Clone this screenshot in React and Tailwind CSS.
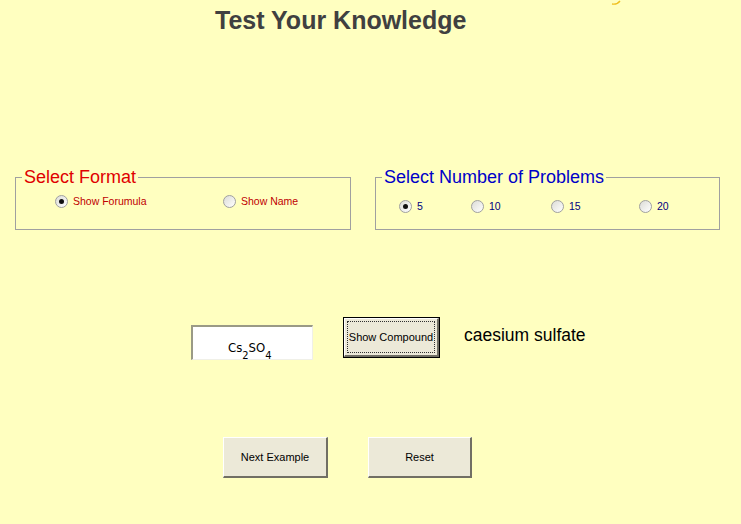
import React from "react";

function Radio({ checked, label, color, width }) {
  return (
    <div className="flex items-center shrink-0" style={{ width }}>
      <span className="relative w-[13px] h-[13px] rounded-full border border-[#a0a0a0] bg-gradient-to-br from-[#dcdcd6] to-white flex items-center justify-center">
        {checked && <span className="w-[5px] h-[5px] rounded-full bg-[#101010]" />}
      </span>
      <span className={`ml-[5px] text-[10.5px] leading-[14px] ${color}`}>{label}</span>
    </div>
  );
}

export default function App() {
  return (
    <div
      className="w-[741px] h-[524px] bg-[#ffffc0] overflow-hidden flex flex-col"
      style={{ fontFamily: '"Liberation Sans", Arial, sans-serif' }}
    >
      {/* title row */}
      <div className="flex items-start h-[40px]">
        <div className="ml-[215px] mt-[5px] text-[25px] leading-[30px] font-bold text-[#404040]">
          Test Your Knowledge
        </div>
        <svg className="ml-[145px]" width="14" height="5" viewBox="0 0 14 5">
          <path d="M1 4 Q6 5 9 1" stroke="#f0c020" strokeWidth="1.3" fill="none" />
        </svg>
      </div>

      {/* groups row */}
      <div className="flex mt-[127px] ml-[15px]">
        <fieldset className="w-[336px] h-[63px] border border-[#a0a0a0]">
          <legend className="ml-[6px] px-[2px] text-[18px] leading-[20px] text-[#e00000]">
            Select Format
          </legend>
          <div className="flex pl-[39px] pt-[7px]">
            <Radio checked label="Show Forumula" color="text-[#c00000]" width={168} />
            <Radio label="Show Name" color="text-[#c00000]" width={120} />
          </div>
        </fieldset>
        <fieldset className="ml-[24px] w-[345px] h-[63px] border border-[#a0a0a0]">
          <legend className="ml-[6px] px-[2px] text-[18px] leading-[20px] text-[#0000c8]">
            Select Number of Problems
          </legend>
          <div className="flex pl-[23px] pt-[12px]">
            <Radio checked label="5" color="text-[#000080]" width={72} />
            <Radio label="10" color="text-[#000080]" width={80} />
            <Radio label="15" color="text-[#000080]" width={88} />
            <Radio label="20" color="text-[#000080]" width={60} />
          </div>
        </fieldset>
      </div>

      {/* compound row */}
      <div className="flex items-start mt-[87px] ml-[191px]">
        <div
          className="mt-[8px] w-[122px] h-[35px] bg-white border-t-2 border-l-2 border-t-[#9a9a86] border-l-[#9a9a86] border-r border-b border-r-[#f0f0e8] border-b-[#f0f0e8] pl-[35px] pt-[13px] text-[13px] leading-[16px] text-black"
          style={{ fontFamily: '"DejaVu Sans Condensed", "Liberation Sans Narrow", "Liberation Sans", sans-serif' }}
        >
          Cs<sub className="text-[11px] align-[-4px] leading-none">2</sub>SO<sub className="text-[11px] align-[-4px] leading-none">4</sub>
        </div>
        <button className="ml-[30px] w-[97px] h-[41px] border border-black bg-[#ece9d8] p-0 flex">
          <span className="flex-1 border-t border-l border-t-white border-l-white border-r-2 border-b-2 border-r-[#716f64] border-b-[#716f64] p-[2px] flex">
            <span className="flex-1 border border-dotted border-[#303030] flex items-center justify-center text-[11px] text-black">
              Show Compound
            </span>
          </span>
        </button>
        <div className="ml-[24px] mt-[8px] text-[17.5px] leading-[20px] text-black">caesium sulfate</div>
      </div>

      {/* bottom buttons */}
      <div className="flex mt-[77px] ml-[223px]">
        <button className="w-[105px] h-[41px] bg-[#ece9d8] border-t border-l border-t-white border-l-white border-r-2 border-b-2 border-r-[#716f64] border-b-[#716f64] text-[11px] text-black flex items-center justify-center">
          Next Example
        </button>
        <button className="ml-[40px] w-[104px] h-[41px] bg-[#ece9d8] border-t border-l border-t-white border-l-white border-r-2 border-b-2 border-r-[#716f64] border-b-[#716f64] text-[11px] text-black flex items-center justify-center">
          Reset
        </button>
      </div>
    </div>
  );
}
